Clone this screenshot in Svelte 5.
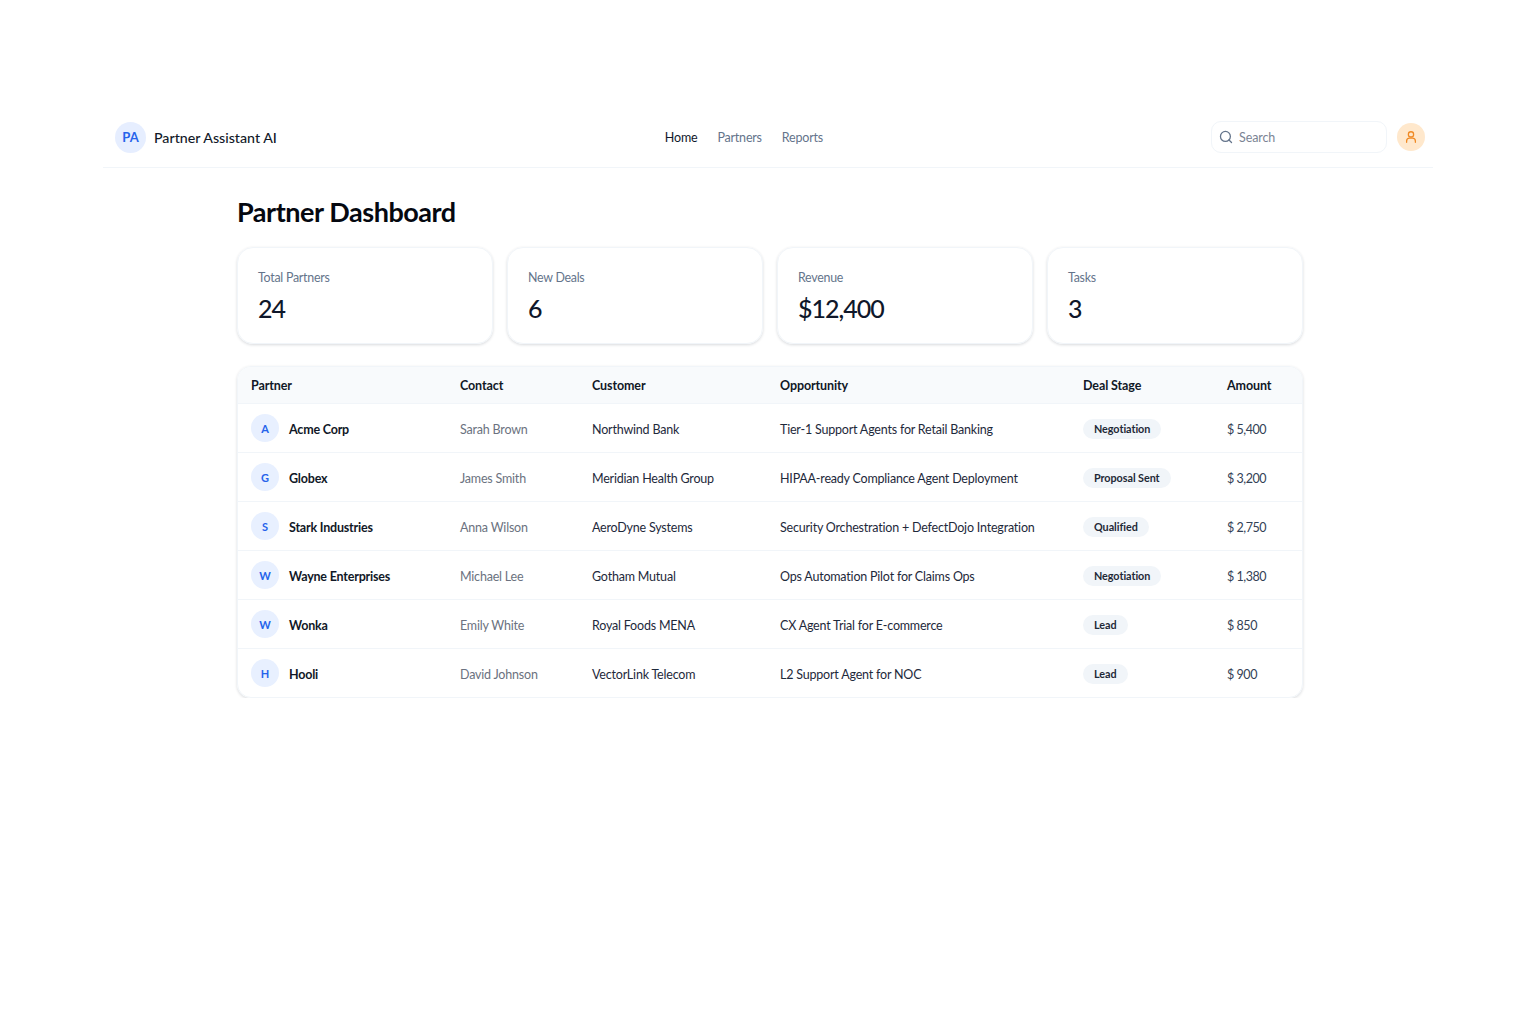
<script>
  const stats = [
    { label: "Total Partners", value: "24" },
    { label: "New Deals", value: "6" },
    { label: "Revenue", value: "$12,400" },
    { label: "Tasks", value: "3" }
  ]

  const rows = [
    { partner: "Acme Corp", contact: "Sarah Brown", customer: "Northwind Bank", opportunity: "Tier-1 Support Agents for Retail Banking", stage: "Negotiation", amount: "$ 5,400" },
    { partner: "Globex", contact: "James Smith", customer: "Meridian Health Group", opportunity: "HIPAA-ready Compliance Agent Deployment", stage: "Proposal Sent", amount: "$ 3,200" },
    { partner: "Stark Industries", contact: "Anna Wilson", customer: "AeroDyne Systems", opportunity: "Security Orchestration + DefectDojo Integration", stage: "Qualified", amount: "$ 2,750" },
    { partner: "Wayne Enterprises", contact: "Michael Lee", customer: "Gotham Mutual", opportunity: "Ops Automation Pilot for Claims Ops", stage: "Negotiation", amount: "$ 1,380" },
    { partner: "Wonka", contact: "Emily White", customer: "Royal Foods MENA", opportunity: "CX Agent Trial for E-commerce", stage: "Lead", amount: "$ 850" },
    { partner: "Hooli", contact: "David Johnson", customer: "VectorLink Telecom", opportunity: "L2 Support Agent for NOC", stage: "Lead", amount: "$ 900" }
  ]
</script>

<div class="page">
  <header class="topbar">
    <div class="brand">
      <span class="logo">PA</span>
      <span class="brand-name">Partner Assistant AI</span>
    </div>
    <nav class="nav">
      <span class="link active">Home</span>
      <span class="link">Partners</span>
      <span class="link">Reports</span>
    </nav>
    <div class="tools">
      <div class="search">
        <svg width="14" height="14" viewBox="0 0 24 24" fill="none" stroke="#64748b" stroke-width="2.2" stroke-linecap="round">
          <circle cx="11" cy="11" r="8.5" />
          <path d="M21.5 21.5l-4.4-4.4" />
        </svg>
        <span class="placeholder">Search</span>
      </div>
      <span class="avatar">
        <svg width="14" height="14" viewBox="0 0 24 24" fill="none" stroke="#f08a24" stroke-width="2.2" stroke-linecap="round">
          <circle cx="12" cy="7.5" r="4.5" />
          <path d="M4.5 21v-2a5 5 0 0 1 5-5h5a5 5 0 0 1 5 5v2" />
        </svg>
      </span>
    </div>
  </header>

  <main class="main">
    <h1>Partner Dashboard</h1>

    <section class="stats">
      {#each stats as stat}
        <div class="stat">
          <div class="stat-label">{stat.label}</div>
          <div class="stat-value">{stat.value}</div>
        </div>
      {/each}
    </section>

    <section class="table-card">
      <table>
        <colgroup>
          <col class="c1" /><col class="c2" /><col class="c3" /><col class="c4" /><col class="c5" /><col class="c6" />
        </colgroup>
        <thead>
          <tr>
            <th>Partner</th>
            <th>Contact</th>
            <th>Customer</th>
            <th>Opportunity</th>
            <th>Deal Stage</th>
            <th>Amount</th>
          </tr>
        </thead>
        <tbody>
          {#each rows as row}
            <tr>
              <td>
                <div class="partner">
                  <span class="initial">{row.partner[0]}</span>
                  <span class="partner-name">{row.partner}</span>
                </div>
              </td>
              <td class="muted">{row.contact}</td>
              <td>{row.customer}</td>
              <td>{row.opportunity}</td>
              <td><span class="badge">{row.stage}</span></td>
              <td class="amount">{row.amount}</td>
            </tr>
          {/each}
        </tbody>
      </table>
    </section>
  </main>
</div>

<style>
  :global(body) {
    background: #fff;
    font-family: "Lato", "Open Sans", sans-serif;
    color: #0f172a;
  }
  .page {
    width: 1330px;
    margin: 0 auto;
    padding-top: 107px;
  }
  .topbar {
    display: flex;
    align-items: center;
    justify-content: space-between;
    height: 60px;
    padding: 0 8px 0 12px;
    border-bottom: 1px solid #f1f5f9;
  }
  .brand {
    display: flex;
    align-items: center;
    gap: 8px;
  }
  .logo {
    width: 31px;
    height: 31px;
    border-radius: 50%;
    background: #e6eeff;
    color: #2563eb;
    font-size: 13px;
    font-weight: 700;
    display: flex;
    align-items: center;
    justify-content: center;
  }
  .brand-name {
    font-size: 14.2px;
    font-weight: 500;
    color: #111827;
  }
  .nav {
    display: flex;
    gap: 20px;
    font-size: 12.5px;
    letter-spacing: -0.2px;
    color: #64748b;
  }
  .link.active {
    color: #0f172a;
  }
  .tools {
    display: flex;
    align-items: center;
    gap: 10px;
  }
  .search {
    box-sizing: border-box;
    width: 176px;
    height: 32px;
    display: flex;
    align-items: center;
    gap: 6px;
    padding: 0 6px 0 7px;
    border: 1px solid #f1f5f9;
    border-radius: 10px;
  }
  .placeholder {
    font-size: 12.5px;
    letter-spacing: -0.1px;
    color: #7b8494;
  }
  .avatar {
    width: 28px;
    height: 28px;
    border-radius: 50%;
    background: #ffe8cc;
    display: flex;
    align-items: center;
    justify-content: center;
  }
  .main {
    width: 1066px;
    margin-left: 134px;
  }
  h1 {
    margin: 26px 0 17px;
    font-size: 27px;
    line-height: 36px;
    font-weight: 700;
    color: #050810;
    letter-spacing: -0.45px;
  }
  .stats {
    display: grid;
    grid-template-columns: repeat(4, 1fr);
    gap: 14px;
  }
  .stat {
    height: 97px;
    box-sizing: border-box;
    padding: 22px 20px 0;
    border: 1px solid #f1f5f9;
    border-radius: 16px;
    box-shadow: 0 1px 3px rgba(15, 23, 42, 0.16);
  }
  .stat-label {
    font-size: 12.4px;
    letter-spacing: -0.25px;
    line-height: 16px;
    color: #64748b;
  }
  .stat-value {
    margin-top: 4px;
    font-size: 25px;
    letter-spacing: -1px;
    line-height: 36px;
    font-weight: 500;
    color: #0f172a;
  }
  .table-card {
    margin-top: 22px;
    border: 1px solid #f1f5f9;
    border-radius: 14px;
    overflow: hidden;
    box-shadow: 0 1px 3px rgba(15, 23, 42, 0.16);
  }
  table {
    width: 100%;
    border-collapse: collapse;
    table-layout: fixed;
    font-size: 12.5px;
    letter-spacing: -0.2px;
    color: #1e293b;
  }
  .c1 { width: 209px; }
  .c2 { width: 132px; }
  .c3 { width: 188px; }
  .c4 { width: 303px; }
  .c5 { width: 144px; }
  th {
    height: 36px;
    padding: 0 13px;
    text-align: left;
    font-weight: 700;
    letter-spacing: -0.1px;
    color: #111827;
    background: #f8fafc;
    border-bottom: 1px solid #f1f5f9;
  }
  td {
    height: 48px;
    padding: 0 13px;
    white-space: nowrap;
    border-bottom: 1px solid #f1f5f9;
  }
  td:not(:first-child) {
    height: 46px;
    padding-top: 2px;
  }
  tbody tr:last-child td {
    border-bottom: none;
  }
  .partner {
    display: flex;
    align-items: center;
    gap: 10px;
  }
  .initial {
    width: 28px;
    height: 28px;
    border-radius: 50%;
    background: #e8f0ff;
    color: #2563eb;
    font-size: 11px;
    letter-spacing: 0;
    font-weight: 700;
    display: flex;
    align-items: center;
    justify-content: center;
  }
  .partner-name {
    margin-top: 2px;
    font-weight: 700;
    color: #111827;
  }
  .muted {
    color: #6b7280;
  }
  .badge {
    display: inline-block;
    padding: 3px 11px;
    border-radius: 999px;
    background: #f1f5f9;
    font-size: 10.8px;
    letter-spacing: -0.05px;
    line-height: 14px;
    font-weight: 700;
    color: #1f2937;
  }
  .amount {
    letter-spacing: -0.45px;
    color: #334155;
  }
</style>
